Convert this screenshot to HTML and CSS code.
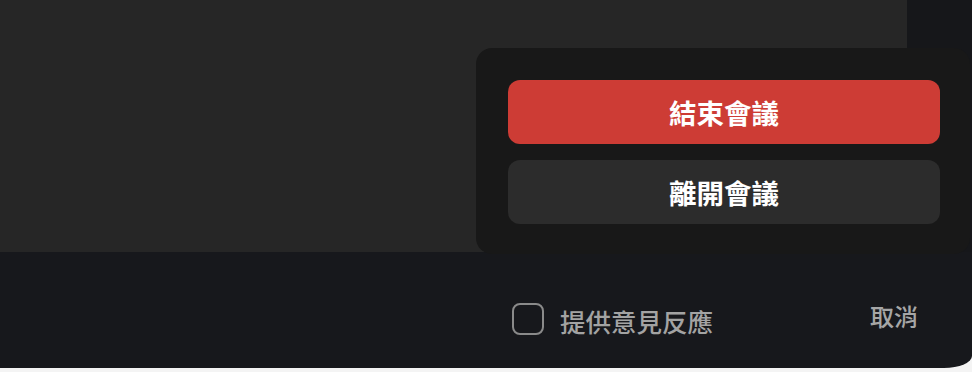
FILE: index.html
```html
<!doctype html>
<html>
  <head>
    <meta charset="utf-8">
    <title>離開會議</title>
    <link rel="stylesheet" href="styles.css">
  </head>
  <body>
    <div class="screen">
      <div class="top">
        <div class="stage"></div>
        <div class="side"></div>
      </div>
      <div class="bar">
        <label class="feedback">
          <span class="box"></span>
          <span class="label">提供意見反應</span>
        </label>
        <button class="cancel">取消</button>
      </div>

      <div class="popup">
        <button class="btn end">結束會議</button>
        <button class="btn leave">離開會議</button>
      </div>
    </div>
  </body>
</html>
```

FILE: styles.css
```css
body {
  margin: 0;
  background: #f4f4f4;
  font-family: "Noto Sans CJK TC", "Noto Sans", sans-serif;
}

.screen {
  position: relative;
  width: 972px;
  height: 368px;
  display: flex;
  flex-direction: column;
  border-bottom-right-radius: 28px 12px;
  overflow: hidden;
}

.top {
  height: 252px;
  display: flex;
}

.stage {
  width: 907px;
  background-color: #262626;
}

.side {
  flex: 1;
  background-color: #16171a;
}

.bar {
  flex: 1;
  background-color: #17181c;
  display: flex;
  align-items: flex-start;
  justify-content: space-between;
  padding: 0 54px 0 512px;
}

.feedback {
  display: flex;
  align-items: center;
  gap: 16px;
  margin-top: 49px;
}

.box {
  width: 28px;
  height: 28px;
  border: 2px solid #8a8a8a;
  border-radius: 8px;
}

.label {
  font-size: 25.5px;
  line-height: 32px;
  font-weight: 500;
  color: #a3a3a3;
  margin-top: 4px;
}

.cancel {
  background: none;
  border: 0;
  padding: 0;
  font-family: inherit;
  font-size: 24px;
  line-height: 32px;
  font-weight: 500;
  color: #a6a6a6;
  margin-top: 48px;
}

.popup {
  position: absolute;
  left: 476px;
  top: 48px;
  width: 432px;
  height: 174px;
  padding: 32px 30px 0 32px;
  background-color: #181818;
  border-radius: 16px;
  display: flex;
  flex-direction: column;
  gap: 16px;
}

.btn {
  height: 64px;
  border: 0;
  border-radius: 12px;
  font-family: inherit;
  font-size: 27.5px;
  font-weight: 700;
  color: #ffffff;
}

.end {
  background-color: #cd3c35;
}

.leave {
  background-color: #2c2c2c;
}
```
